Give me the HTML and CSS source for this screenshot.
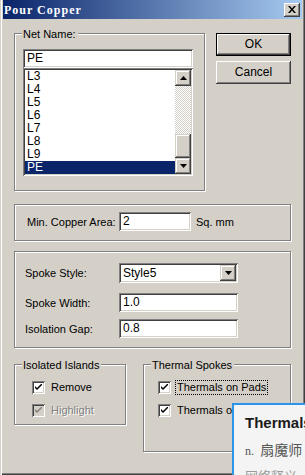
FILE: index.html
```html
<!DOCTYPE html>
<html lang="en">
<head>
    <meta charset="UTF-8">
    <title>Pour Copper</title>
    <link rel="stylesheet" href="styles.css">
</head>
<body>
    <div class="window">
        <div class="titlebar">
            <span class="title">Pour Copper</span>
            <span class="close-btn">
                <svg width="8" height="7" viewBox="0 0 8 7"><path d="M0 0h2l2 2.5L6 0h2L5 3.5 8 7H6L4 4.5 2 7H0l3-3.5z" fill="#000"/></svg>
            </span>
        </div>
        <div class="client">
            <div class="top-row">
                <div class="group net-group">
                    <div class="group-label">Net Name:</div>
                    <div class="field net-field">PE</div>
                    <div class="listbox">
                        <ul class="list-items">
                            <li>L3</li>
                            <li>L4</li>
                            <li>L5</li>
                            <li>L6</li>
                            <li>L7</li>
                            <li>L8</li>
                            <li>L9</li>
                            <li class="selected">PE</li>
                        </ul>
                        <div class="scrollbar">
                            <div class="sb-btn"><svg width="7" height="4" viewBox="0 0 7 4"><path d="M3.5 0L7 4H0z" fill="#000"/></svg></div>
                            <div class="sb-track"></div>
                            <div class="sb-thumb"></div>
                            <div class="sb-btn"><svg width="7" height="4" viewBox="0 0 7 4"><path d="M0 0h7L3.5 4z" fill="#000"/></svg></div>
                        </div>
                    </div>
                </div>
                <div class="buttons">
                    <div class="btn btn-default">OK</div>
                    <div class="btn">Cancel</div>
                </div>
            </div>

            <div class="group area-group">
                <div class="row">
                    <span class="lbl area-lbl">Min. Copper Area:</span>
                    <div class="field area-field">2</div>
                    <span class="unit">Sq. mm</span>
                </div>
            </div>

            <div class="group spoke-group">
                <div class="row spoke-row">
                    <span class="lbl spoke-lbl">Spoke Style:</span>
                    <div class="field combo">
                        <span class="combo-text">Style5</span>
                        <span class="combo-btn"><svg width="7" height="4" viewBox="0 0 7 4"><path d="M0 0h7L3.5 4z" fill="#000"/></svg></span>
                    </div>
                </div>
                <div class="row spoke-row">
                    <span class="lbl spoke-lbl">Spoke Width:</span>
                    <div class="field spoke-field">1.0</div>
                </div>
                <div class="row spoke-row gap-row">
                    <span class="lbl spoke-lbl">Isolation Gap:</span>
                    <div class="field spoke-field">0.8</div>
                </div>
            </div>

            <div class="bottom-row">
                <div class="group islands-group">
                    <div class="group-label">Isolated Islands</div>
                    <div class="check-row">
                        <span class="checkbox"><svg width="7" height="7" viewBox="0 0 7 7"><path d="M0 2l2 2 5-5v2L2 6 0 4z" fill="#000"/></svg></span>
                        <span class="check-text">Remove</span>
                    </div>
                    <div class="check-row disabled">
                        <span class="checkbox"><svg width="7" height="7" viewBox="0 0 7 7"><path d="M0 2l2 2 5-5v2L2 6 0 4z" fill="#808080"/></svg></span>
                        <span class="check-text">Highlight</span>
                    </div>
                </div>
                <div class="group thermal-group">
                    <div class="group-label">Thermal Spokes</div>
                    <div class="check-row">
                        <span class="checkbox"><svg width="7" height="7" viewBox="0 0 7 7"><path d="M0 2l2 2 5-5v2L2 6 0 4z" fill="#000"/></svg></span>
                        <span class="check-text focused">Thermals on Pads</span>
                    </div>
                    <div class="check-row">
                        <span class="checkbox"><svg width="7" height="7" viewBox="0 0 7 7"><path d="M0 2l2 2 5-5v2L2 6 0 4z" fill="#000"/></svg></span>
                        <span class="check-text">Thermals on Vias</span>
                    </div>
                </div>
            </div>
        </div>

        <div class="popup">
            <div class="popup-word">Thermals</div>
            <div class="popup-def"><span class="pos">n.</span> 扇魔师（</div>
            <div class="popup-web">网络释义</div>
        </div>
    </div>
</body>
</html>
```

FILE: styles.css
```css
*{
    margin: 0;
    padding: 0;
    box-sizing: border-box;
}
body{
    font-family: "Liberation Sans", Arial, sans-serif;
    font-size: 11px;
    color: #000;
    background: #d4d0c8;
}
ul{
    list-style: none;
}
.window{
    position: relative;
    width: 305px;
    height: 475px;
    overflow: hidden;
    background: #d4d0c8;
    box-shadow: inset 1px 0 #d4d0c8, inset 2px 0 #fff, inset -1px -1px #404040, inset -2px -2px #808080;
}

/* title bar */
.titlebar{
    display: flex;
    align-items: center;
    justify-content: space-between;
    height: 19px;
    margin: 0 3px 0 3px;
    padding: 0 2px 0 1px;
    background: linear-gradient(to right, #0a246a, #a6caf0);
}
.title{
    font-family: "Liberation Serif", "Times New Roman", serif;
    font-weight: bold;
    font-size: 12px;
    letter-spacing: 1px;
    color: #fff;
    padding-top: 1px;
}
.close-btn{
    display: flex;
    align-items: center;
    justify-content: center;
    width: 16px;
    height: 14px;
    background: #d4d0c8;
    box-shadow: inset -1px -1px #404040, inset 1px 1px #fff, inset -2px -2px #808080;
}

/* shared widgets */
.client{
    padding-left: 14px;
}
.group{
    border: 1px solid #808080;
    box-shadow: inset 1px 1px #fff, 1px 1px #fff;
}
.group-label{
    display: table;
    height: 13px;
    line-height: 13px;
    margin: -6px 0 0 7px;
    padding: 0 2px 0 1px;
    background: #d4d0c8;
}
.field{
    background: #fff;
    box-shadow: inset 1px 1px #808080, inset -1px -1px #fff, inset 2px 2px #404040, inset -2px -2px #d4d0c8;
    padding: 0 3px 0 4px;
    font-size: 12px;
    line-height: 19px;
    height: 19px;
}
.row{
    display: flex;
    align-items: center;
}

/* net name */
.top-row{
    display: flex;
    align-items: flex-start;
    margin-top: 14px;
}
.net-group{
    width: 191px;
    height: 158px;
}
.net-field{
    width: 170px;
    margin: 8px 0 0 8px;
}
.listbox{
    display: flex;
    width: 170px;
    height: 108px;
    margin-left: 8px;
    padding: 2px;
    background: #fff;
    box-shadow: inset 1px 1px #808080, inset -1px -1px #fff, inset 2px 2px #404040, inset -2px -2px #d4d0c8;
}
.list-items{
    flex: 1;
    font-size: 12px;
}
.list-items li{
    height: 13px;
    line-height: 13px;
    padding-left: 2px;
}
.list-items li.selected{
    background: #0a246a;
    color: #fff;
}
.scrollbar{
    display: flex;
    flex-direction: column;
    width: 16px;
}
.sb-btn,
.sb-thumb{
    background: #d4d0c8;
    box-shadow: inset -1px -1px #404040, inset 1px 1px #d4d0c8, inset -2px -2px #808080, inset 2px 2px #fff;
}
.sb-btn{
    display: flex;
    align-items: center;
    justify-content: center;
    height: 16px;
}
.sb-track{
    height: 48px;
    background-image: conic-gradient(#d4d0c8 25%, #fff 0 50%, #d4d0c8 0 75%, #fff 0);
    background-size: 2px 2px;
}
.sb-thumb{
    height: 24px;
}

/* buttons */
.buttons{
    display: flex;
    flex-direction: column;
    gap: 5px;
    margin-left: 11px;
}
.btn{
    width: 75px;
    height: 23px;
    line-height: 22px;
    text-align: center;
    font-size: 12px;
    background: #d4d0c8;
    box-shadow: inset -1px -1px #404040, inset 1px 1px #fff, inset -2px -2px #808080;
}
.btn-default{
    border: 1px solid #000;
    line-height: 20px;
}

/* min copper area */
.area-group{
    width: 277px;
    height: 37px;
    margin-top: 13px;
    padding: 7px 0 0 12px;
}
.area-lbl{
    width: 92px;
}
.area-field{
    width: 72px;
}
.unit{
    margin-left: 5px;
}

/* spokes */
.spoke-group{
    width: 277px;
    height: 97px;
    margin-top: 10px;
    padding: 11px 0 0 10px;
}
.spoke-row{
    margin-bottom: 10px;
}
.gap-row{
    margin-top: -3px;
}
.spoke-lbl{
    width: 94px;
}
.spoke-field{
    width: 119px;
}
.combo{
    display: flex;
    align-items: center;
    justify-content: space-between;
    width: 119px;
    height: 20px;
    padding: 2px 2px 2px 4px;
}
.combo-btn{
    display: flex;
    align-items: center;
    justify-content: center;
    width: 16px;
    height: 16px;
    background: #d4d0c8;
    box-shadow: inset -1px -1px #404040, inset 1px 1px #d4d0c8, inset -2px -2px #808080, inset 2px 2px #fff;
}

/* bottom groups */
.bottom-row{
    display: flex;
    align-items: flex-start;
    margin-top: 16px;
}
.islands-group{
    width: 112px;
    height: 61px;
    padding-left: 17px;
}
.thermal-group{
    width: 148px;
    height: 88px;
    margin-left: 17px;
    padding-left: 14px;
}
.islands-group .group-label{
    margin-left: -10px;
}
.thermal-group .group-label{
    margin-left: -7px;
}
.check-row{
    display: flex;
    align-items: center;
    height: 15px;
    margin-top: 8px;
}
.checkbox{
    display: flex;
    align-items: center;
    justify-content: center;
    width: 13px;
    height: 13px;
    background: #fff;
    box-shadow: inset 1px 1px #808080, inset -1px -1px #fff, inset 2px 2px #404040, inset -2px -2px #d4d0c8;
}
.check-text{
    margin-left: 4px;
    padding: 0 1px;
    line-height: 13px;
    border: 1px solid transparent;
    white-space: nowrap;
}
.check-text.focused{
    border: 1px dotted #000;
}
.disabled .checkbox{
    background: #d4d0c8;
}
.disabled .check-text{
    color: #808080;
    text-shadow: 1px 1px #fff;
}

/* dictionary popup */
.popup{
    position: absolute;
    left: 232px;
    top: 403px;
    width: 80px;
    height: 80px;
    padding: 9px 0 0 11px;
    background: #f4f4f4;
    border: 2px solid #2b95e9;
    white-space: nowrap;
    overflow: hidden;
}
.popup-word{
    font-weight: bold;
    font-size: 15px;
    color: #1a1a1a;
}
.popup-def{
    margin-top: 8px;
    font-family: "Noto Sans CJK SC", sans-serif;
    font-size: 14px;
    color: #555;
}
.pos{
    font-family: "Liberation Serif", serif;
    font-size: 12px;
    margin-right: 3px;
}
.popup-web{
    margin-top: 7px;
    font-family: "Noto Sans CJK SC", sans-serif;
    font-size: 13px;
    color: #999;
}
```
